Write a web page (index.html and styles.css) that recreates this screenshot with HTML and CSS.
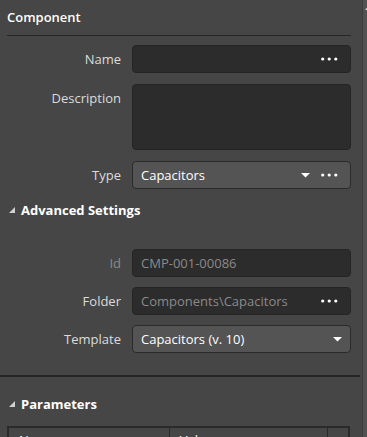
FILE: index.html
```html
<!DOCTYPE html>
<html>
  <head>
    <meta charset="utf-8">
    <title>Component</title>
    <link rel="stylesheet" href="styles.css">
  </head>
  <body>
    <div class="app">
      <div class="main">
        <div class="section-title">Component</div>

        <div class="form first">
          <label class="label">Name</label>
          <div class="field">
            <span class="value"></span>
            <svg class="dots" width="17" height="4" viewBox="0 0 17 4"><circle cx="1.7" cy="2" r="1.6"/><circle cx="8.2" cy="2" r="1.6"/><circle cx="14.8" cy="2" r="1.6"/></svg>
          </div>

          <label class="label">Description</label>
          <div class="field tall"></div>

          <label class="label">Type</label>
          <div class="field combo">
            <span class="value">Capacitors</span>
            <svg class="caret" width="9" height="5" viewBox="0 0 9 5"><polygon points="0,0 9,0 4.5,4.5"/></svg>
            <svg class="dots" width="17" height="4" viewBox="0 0 17 4"><circle cx="1.7" cy="2" r="1.6"/><circle cx="8.2" cy="2" r="1.6"/><circle cx="14.8" cy="2" r="1.6"/></svg>
          </div>
        </div>

        <div class="group-title">
          <svg class="expander" width="6" height="6" viewBox="0 0 6 6"><polygon points="6,0 6,6 0,6"/></svg>
          Advanced Settings
        </div>

        <div class="form second">
          <label class="label muted">Id</label>
          <div class="field">
            <span class="value muted">CMP-001-00086</span>
          </div>

          <label class="label">Folder</label>
          <div class="field">
            <span class="value muted">Components\Capacitors</span>
            <svg class="dots" width="17" height="4" viewBox="0 0 17 4"><circle cx="1.7" cy="2" r="1.6"/><circle cx="8.2" cy="2" r="1.6"/><circle cx="14.8" cy="2" r="1.6"/></svg>
          </div>

          <label class="label">Template</label>
          <div class="field combo">
            <span class="value">Capacitors (v. 10)</span>
            <svg class="caret end" width="9" height="5" viewBox="0 0 9 5"><polygon points="0,0 9,0 4.5,4.5"/></svg>
          </div>
        </div>

        <div class="divider"></div>

        <div class="group-title params-title">
          <svg class="expander" width="6" height="6" viewBox="0 0 6 6"><polygon points="6,0 6,6 0,6"/></svg>
          Parameters
        </div>

        <table class="params">
          <tr>
            <th class="col-name">Name</th>
            <th class="col-value">Value</th>
            <th class="col-extra"></th>
          </tr>
        </table>
      </div>
      <div class="scrollbar"><span class="arrow"></span></div>
    </div>
  </body>
</html>
```

FILE: styles.css
```css
* {
    box-sizing: border-box;
}
body {
    margin: 0;
    background: #464646;
    color: #ffffff;
    font-family: "Open Sans", "Noto Sans", sans-serif;
    font-size: 13px;
}
.app {
    display: grid;
    grid-template-columns: 1fr 5px;
    height: 437px;
    overflow: hidden;
}
.main {
    padding: 0 11px 0 7px;
    overflow: hidden;
}
.section-title {
    height: 36px;
    line-height: 35px;
    font-weight: 600;
    border-bottom: 1px solid #262626;
}
.form {
    display: grid;
    grid-template-columns: 114px 1fr;
    column-gap: 11px;
    align-items: start;
}
.form.first {
    margin-top: 9px;
    row-gap: 11px;
}
.form.second {
    row-gap: 10px;
}
.label {
    text-align: right;
    line-height: 28px;
    color: #dcdcdc;
}
.label.muted {
    color: #8a8a8a;
}
.field {
    height: 28px;
    display: flex;
    align-items: center;
    padding: 0 12px 0 8px;
    background: #2c2c2c;
    border: 1px solid #252525;
    border-radius: 4px;
}
.field.tall {
    height: 66px;
}
.field.combo {
    background: #545454;
    border-color: #2a2a2a;
}
.value {
    flex: 1;
    white-space: nowrap;
    overflow: hidden;
}
.value.muted {
    color: #8a8a8a;
}
.dots {
    fill: #ffffff;
}
.caret {
    fill: #ffffff;
    margin-right: 11px;
}
.caret.end {
    margin-right: -4px;
}
.group-title {
    display: flex;
    align-items: center;
    gap: 6px;
    height: 20px;
    margin: 11px 0 29px 2px;
    font-weight: 700;
}
.expander {
    fill: #d0d0d0;
}
.divider {
    height: 2px;
    background: #262626;
    margin: 22px -9px 0 -7px;
}
.params-title {
    margin: 17px 0 12px 2px;
}
.params {
    width: 343px;
    border-collapse: collapse;
    border: 2px solid #2a2a2a;
}
.params th {
    text-align: left;
    font-weight: 400;
    padding: 3px 10px;
    border-right: 1px solid #2a2a2a;
}
.col-name {
    width: 163px;
}
.col-value {
    width: 160px;
}
.scrollbar {
    position: relative;
    background: #525252;
    border-left: 1px solid #3c3c3c;
}
.arrow {
    position: absolute;
    top: 6px;
    left: 2px;
    width: 0;
    height: 0;
    border-left: 3px solid transparent;
    border-right: 3px solid transparent;
    border-bottom: 4px solid #cfcfcf;
}
```
